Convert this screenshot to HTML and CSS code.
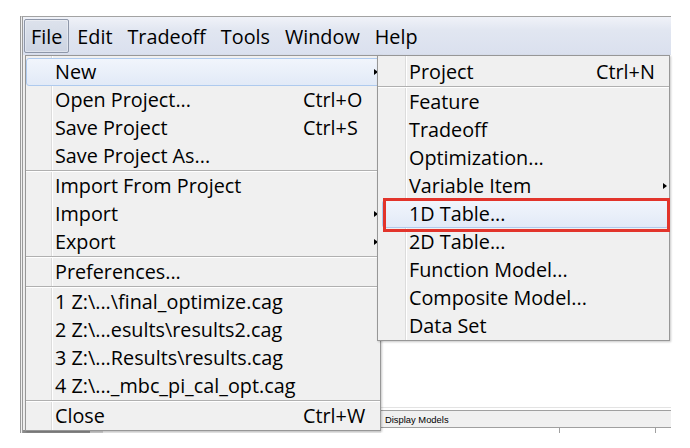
FILE: index.html
```html
<!DOCTYPE html>
<html lang="en">
<head>
<meta charset="utf-8">
<title>File menu</title>
<link rel="stylesheet" href="styles.css">
</head>
<body>
<div class="window">
  <div class="menubar">
    <span class="mb-item active">File</span>
    <span class="mb-item">Edit</span>
    <span class="mb-item">Tradeoff</span>
    <span class="mb-item">Tools</span>
    <span class="mb-item">Window</span>
    <span class="mb-item">Help</span>
  </div>
  <div class="workspace">
    <div class="left-pane"><div class="left-foot"></div></div>
    <div class="right-pane">
      <div class="canvas"></div>
      <div class="sb-rule"></div>
      <div class="statusbar">Display Models</div>
      <div class="table-head"><span></span><span></span><span></span></div>
    </div>
  </div>

  <div class="menu file-menu">
    <div class="row hover"><span>New</span><span></span><span class="arrow"></span></div>
    <div class="row"><span>Open Project...</span><span>Ctrl+O</span><span></span></div>
    <div class="row"><span>Save Project</span><span>Ctrl+S</span><span></span></div>
    <div class="row"><span>Save Project As...</span><span></span><span></span></div>
    <div class="sep"></div>
    <div class="row"><span>Import From Project</span><span></span><span></span></div>
    <div class="row"><span>Import</span><span></span><span class="arrow"></span></div>
    <div class="row"><span>Export</span><span></span><span class="arrow"></span></div>
    <div class="sep"></div>
    <div class="row"><span>Preferences...</span><span></span><span></span></div>
    <div class="sep"></div>
    <div class="row"><span>1 Z:\...\final_optimize.cag</span><span></span><span></span></div>
    <div class="row"><span>2 Z:\...esults\results2.cag</span><span></span><span></span></div>
    <div class="row"><span>3 Z:\...Results\results.cag</span><span></span><span></span></div>
    <div class="row"><span>4 Z:\..._mbc_pi_cal_opt.cag</span><span></span><span></span></div>
    <div class="sep"></div>
    <div class="row"><span>Close</span><span>Ctrl+W</span><span></span></div>
  </div>

  <div class="menu sub-menu">
    <div class="row"><span>Project</span><span>Ctrl+N</span><span></span></div>
    <div class="sep"></div>
    <div class="row"><span>Feature</span><span></span><span></span></div>
    <div class="row"><span>Tradeoff</span><span></span><span></span></div>
    <div class="row"><span>Optimization...</span><span></span><span></span></div>
    <div class="row"><span>Variable Item</span><span></span><span class="arrow"></span></div>
    <div class="row hover"><span>1D Table...</span><span></span><span></span></div>
    <div class="row"><span>2D Table...</span><span></span><span></span></div>
    <div class="row"><span>Function Model...</span><span></span><span></span></div>
    <div class="row"><span>Composite Model...</span><span></span><span></span></div>
    <div class="row"><span>Data Set</span><span></span><span></span></div>
  </div>

  <div class="callout"></div>
</div>
</body>
</html>
```
FILE: styles.css
```css
html, body {
  margin: 0;
  padding: 0;
  background: #ffffff;
  overflow: hidden;
}

body {
  font-family: "Open Sans", "Noto Sans", sans-serif;
  color: #000;
}

.window {
  position: relative;
  box-sizing: border-box;
  width: 651px;
  height: 417px;
  margin: 16px 0 0 20px;
  border-top: 1px solid #a3a3a3;
  border-left: 3px double #9a9a9a;
  background: #f0f0f0;
  display: flex;
  flex-direction: column;
}

/* ---------- menu bar ---------- */
.menubar {
  flex: none;
  box-sizing: border-box;
  height: 38px;
  padding: 2px 0 0 1px;
  display: flex;
  align-items: flex-start;
  gap: 1px;
  background: linear-gradient(to bottom, #f0f2f8 0%, #e1e6f1 35%, #dae0ee 100%);
  font-size: 19.8px;
}

.mb-item {
  box-sizing: border-box;
  height: 34px;
  line-height: 30px;
  padding: 2px 6px 0;
  border: 1px solid transparent;
  border-radius: 2px;
  white-space: nowrap;
}

.mb-item.active {
  border-color: #8e97a9;
  background: linear-gradient(to bottom, #dde2ec 0%, #cdd4e2 100%);
  box-shadow: inset 0 0 0 1px rgba(255, 255, 255, 0.35);
}

/* ---------- background window ---------- */
.workspace {
  flex: 1;
  display: flex;
  min-height: 0;
}

.left-pane {
  width: 358px;
  flex: none;
  display: flex;
  flex-direction: column;
  justify-content: flex-end;
  background: #f0f0f0;
}

.left-foot {
  height: 3px;
  background: linear-gradient(to right, #8c8c8c 0 67px, #cfcfcf 67px 80px, #f0f0f0 80px);
}

.right-pane {
  flex: 1;
  display: flex;
  flex-direction: column;
  background: #ffffff;
}

.canvas {
  flex: 1;
  background: #ffffff;
}

.sb-rule {
  height: 1px;
  margin-bottom: 2px;
  background: #e3e3e3;
}

.statusbar {
  box-sizing: border-box;
  height: 18px;
  padding-left: 4px;
  border-top: 1px solid #a0a0a0;
  border-bottom: 1px solid #a0a0a0;
  background: #f0f0f0;
  font-family: "Liberation Sans", Arial, sans-serif;
  font-size: 9.4px;
  line-height: 17px;
  white-space: nowrap;
}

.table-head {
  height: 5px;
  display: grid;
  grid-template-columns: 178px 96px 1fr;
}

.table-head span + span {
  border-left: 1px solid #a0a0a0;
}

/* ---------- drop-down menus ---------- */
.menu {
  position: absolute;
  box-sizing: border-box;
  padding-top: 2px;
  border: 1px solid #979797;
  box-shadow: 1px 1px 2px rgba(0, 0, 0, 0.22);
  font-size: 19.8px;
  white-space: nowrap;
}

.file-menu {
  left: 2px;
  top: 38px;
  width: 356px;
  background:
    linear-gradient(to right, transparent 25px, #dcdcdc 25px 26px, #ffffff 26px 27px, transparent 27px),
    #f0f0f0;
}

.sub-menu {
  left: 354px;
  top: 38px;
  width: 293px;
  background:
    linear-gradient(to right, transparent 27px, #dcdcdc 27px 28px, #ffffff 28px 29px, transparent 29px),
    #f0f0f0;
}

.row {
  box-sizing: border-box;
  height: 28px;
  line-height: 26px;
  border: 1px solid transparent;
  border-radius: 3px;
  display: grid;
  align-items: center;
}

.file-menu .row {
  padding-left: 28px;
  grid-template-columns: 248px 62px 14px;
}

.sub-menu .row {
  padding-left: 30px;
  grid-template-columns: 187px 62px 10px;
}

.sub-menu .row.hover {
  margin-left: 4px;
  padding-left: 26px;
}

.row.hover {
  border-color: #aecaee;
  background: linear-gradient(to bottom, #f1f5fc 0%, #e2eaf7 100%);
}

.arrow {
  justify-self: end;
  margin-right: 1px;
  width: 0;
  height: 0;
  border-left: 4px solid #000;
  border-top: 3.5px solid transparent;
  border-bottom: 3.5px solid transparent;
}

.sep {
  box-sizing: border-box;
  height: 2px;
  border-top: 1px solid #b0b0b0;
  border-bottom: 1px solid #ffffff;
}

/* ---------- annotation ---------- */
.callout {
  position: absolute;
  left: 360px;
  top: 181px;
  width: 287px;
  height: 34px;
  box-sizing: border-box;
  border: 3px solid #e2342b;
}
```
